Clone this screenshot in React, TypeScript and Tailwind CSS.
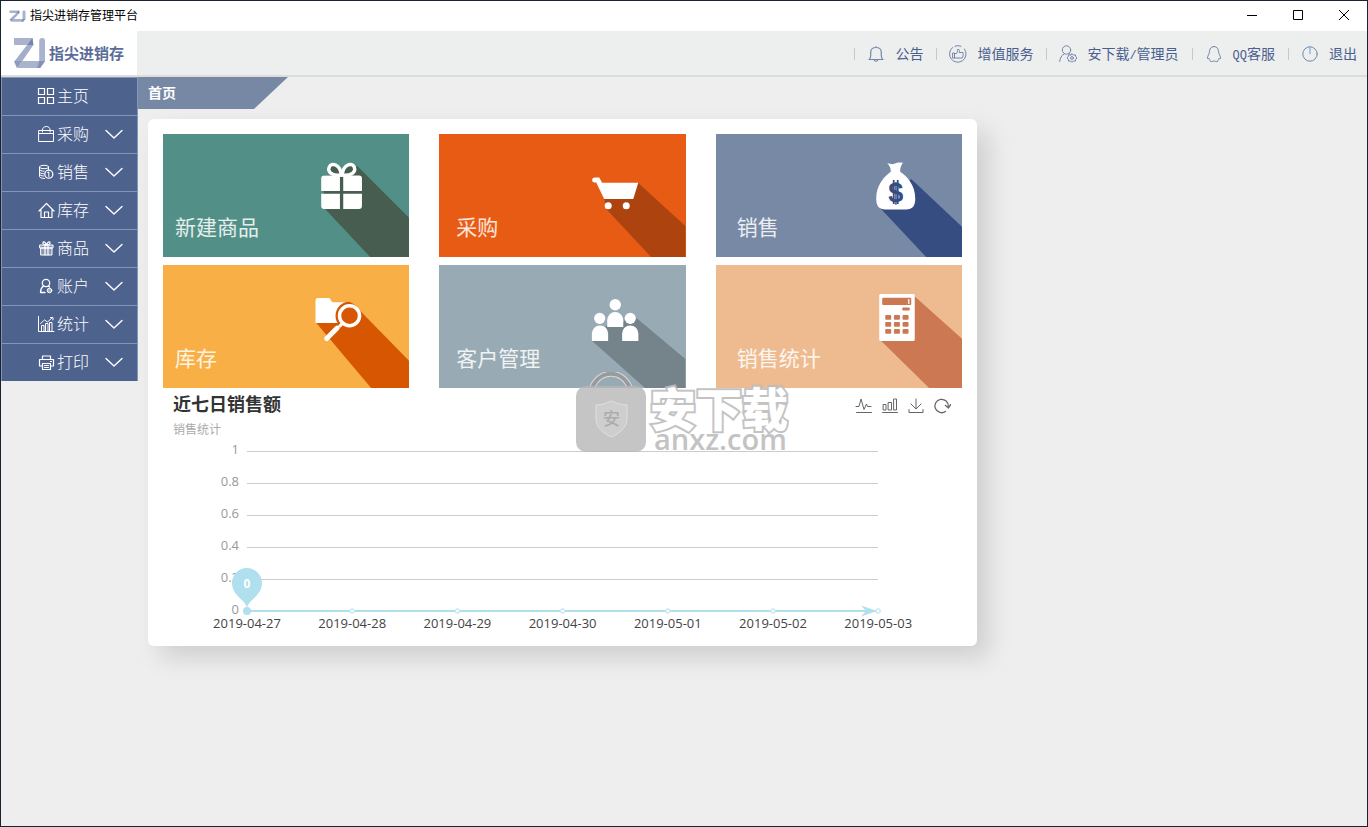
import React from "react";

type IconProps = { className?: string };

function Mark({ className }: IconProps) {
  return (
    <svg viewBox="0 0 34 32" preserveAspectRatio="none" className={className} aria-hidden="true">
      <path d="M1 1h19l-1 7H1z" fill="#a9b3cd" />
      <path d="M20 1l1 7L9 25H1z" fill="#a3aecb" />
      <path d="M20 1l1 7h-6z" fill="#7583aa" />
      <path d="M1 24l3 7 7-7z" fill="#8f9bbd" />
      <path d="M9 24h19l-3 7H4z" fill="#a9b3cd" />
      <path d="M27 4a3 3 0 0 1 6 0v20l-5 7h-4l3-7z" fill="#a9b3cd" />
      <path d="M27 24h6l-5 7h-3z" fill="#8491b5" />
    </svg>
  );
}

function StrokeIcon({ className, children }: IconProps & { children: React.ReactNode }) {
  return (
    <svg
      viewBox="0 0 18 18"
      className={className ?? "size-[18px] shrink-0"}
      fill="none"
      stroke="currentColor"
      strokeLinecap="round"
      strokeLinejoin="round"
      aria-hidden="true"
    >
      {children}
    </svg>
  );
}

const menu: { label: string; open: boolean; icon: React.ReactNode }[] = [
  {
    label: "主页",
    open: false,
    icon: (
      <StrokeIcon>
        <path strokeLinejoin="miter" strokeWidth="1.2" d="M1.5 1.5h6v6h-6zM10.5 1.5h6v6h-6zM1.5 10.5h6v6h-6zM10.5 10.5h6v6h-6z" />
      </StrokeIcon>
    ),
  },
  {
    label: "采购",
    open: true,
    icon: (
      <StrokeIcon>
        <path d="M2 5.500h14.500v11H2zM2 8.500h14.500M5.500 7V5c0-2 1.500-3.500 3.800-3.500s3.800 1.500 3.800 3.500v2" />
      </StrokeIcon>
    ),
  },
  {
    label: "销售",
    open: true,
    icon: (
      <StrokeIcon>
        <ellipse cx="7" cy="4" rx="4.500" ry="1.700" />
        <path d="M2.500 4v9.500c0 1 2 2 5 2M11.500 4v2.500M2.500 6.500c0 1 2 1.700 4.500 1.700M2.500 9c0 1 2 1.700 4 1.700M2.500 11.300c0 1 2 1.700 4 1.700" />
        <circle cx="11.800" cy="11.200" r="4" strokeWidth="1.300" />
        <path d="M11.800 9v4.500M10.700 9.500h1" />
      </StrokeIcon>
    ),
  },
  {
    label: "库存",
    open: true,
    icon: (
      <StrokeIcon>
        <path strokeWidth="1.200" d="M2 10L9.500 2.500 17 10M4 9v7.500h11V9M7.500 16v-5h4v5" />
      </StrokeIcon>
    ),
  },
  {
    label: "商品",
    open: true,
    icon: (
      <StrokeIcon>
        <path fill="currentColor" fillOpacity="0.350" d="M3 6h13v3H3zM4 9h11v7H4z" />
        <path strokeWidth="1.200" d="M8 6V16M11 6V16M9.500 6C7.500 6 5.500 5 6 3.500S8.500 3 9.500 6C10.500 3 12.500 2 13 3.500S11.500 6 9.500 6" />
      </StrokeIcon>
    ),
  },
  {
    label: "账户",
    open: true,
    icon: (
      <StrokeIcon>
        <circle cx="9" cy="6" r="3.700" strokeWidth="1.300" />
        <path strokeWidth="1.300" d="M6.500 9C4.500 10.500 3.500 12.500 3.500 15.500H8M11.500 9l1 1" />
        <circle cx="12.500" cy="13.500" r="2.300" fill="currentColor" fillOpacity="0.500" />
      </StrokeIcon>
    ),
  },
  {
    label: "统计",
    open: true,
    icon: (
      <StrokeIcon>
        <path d="M1.500 1.500v15h15.500M4.500 16V10.500h2.500V16M8.500 16V8.500H11V16M12.500 16V7.500H15V16M3.500 8.500l4-3.500 3 2 5-4.500M13.500 2.500h2.500v2.500" />
      </StrokeIcon>
    ),
  },
  {
    label: "打印",
    open: true,
    icon: (
      <StrokeIcon>
        <path strokeWidth="1.200" d="M5.500 6.500V3h8v3.500M5 13H2.500V6.500h14V13H14M5.500 10.500h8v6h-8zM7.500 12.500h4M7.500 14.500h4M13.500 8.500h1" />
      </StrokeIcon>
    ),
  },
];

const topLinks: { label: React.ReactNode; key: string; icon: React.ReactNode }[] = [
  {
    key: "notice",
    label: "公告",
    icon: (
      <StrokeIcon>
        <path strokeWidth="1.200" d="M2 14.500h14c-1.500-1-1.700-2.500-1.700-4V7.500c0-3-2.200-5-5.300-5S3.700 4.500 3.700 7.500v3c0 1.500-.2 3-1.700 4zM7.300 15c.3 1.500 3.100 1.500 3.400 0M9 2.500v-1" />
      </StrokeIcon>
    ),
  },
  {
    key: "service",
    label: "增值服务",
    icon: (
      <StrokeIcon>
        <path d="M3.500 2.500A8.300 8.300 0 1 0 15.500 4M6 1.200a8 8 0 0 1 6 0" />
        <path d="M4 8h1.500v5H4zM5.500 8.500H7.500C8.500 7.500 8.500 6 8.500 4.500h1.300c.7.700.7 1.700.4 3H14c.5 3 0 4.500-.8 5.500H5.500" />
      </StrokeIcon>
    ),
  },
  {
    key: "account",
    label: (
      <>
        安下载<span className="font-mono text-xs">/</span>管理员
      </>
    ),
    icon: (
      <StrokeIcon>
        <circle cx="7.500" cy="5" r="4.200" />
        <path d="M.7 16.500C1 13 2.500 10.500 5 9M10 8.500l1 .5" />
        <circle cx="13" cy="13" r="1.400" />
        <path d="M13 8.800l1.400 1.300 1.900-.3.500 1.900 1.200 1.300-1.200 1.300-.5 1.900-1.900-.3L13 17.300l-1.400-1.400-1.900.3-.5-1.900L8 13l1.200-1.300.5-1.900 1.900.3z" />
      </StrokeIcon>
    ),
  },
  {
    key: "qq",
    label: (
      <>
        <span className="font-mono text-xs">QQ</span>客服
      </>
    ),
    icon: (
      <StrokeIcon>
        <path d="M9 1.500c-3 0-4.500 2.200-4.500 5.200 0 2-2 4-2 6.300 0 1.200.8 1 1.500.3.200.9.600 1.500 1.200 2-1.200 1.500 2.300 1.700 3.800.5 1.500 1.200 5 1 3.800-.5.600-.5 1-1.100 1.200-2 .7.700 1.500.900 1.500-.3 0-2.300-2-4.300-2-6.300 0-3-1.500-5.200-4.500-5.200z" />
      </StrokeIcon>
    ),
  },
  {
    key: "exit",
    label: "退出",
    icon: (
      <StrokeIcon>
        <circle cx="9" cy="9" r="7.200" />
        <path d="M9 2.500v6" stroke="#7fb4e0" strokeWidth="1.300" />
      </StrokeIcon>
    ),
  },
];

const tiles: { label: string; bg: string; pad: string; art: React.ReactNode }[] = [
  {
    label: "新建商品",
    bg: "bg-[#529087]",
    pad: "pl-3",
    art: (
      <>
        <path d="M161 74L207 123H246V84L194 32 178 41H160z" fill="#465d4f" />
        <g fill="#465d4f" stroke="#fff" strokeWidth="3.400">
          <path d="M178 41C169 42 164 38 166 33s11-3 12 8z" />
          <path d="M179 41C188 42 193 38 191 33s-11-3-12 8z" />
        </g>
        <path fill="#fff" d="M161 41.500h15.700v15.500H158V44.500a3 3 0 0 1 3-3zM180 41.500h15.700a3 3 0 0 1 3 3V57H180zM158 59.700h18.700V75H161a3 3 0 0 1-3-3zM180 59.700h18.700V72a3 3 0 0 1-3 3H180z" />
      </>
    ),
  },
  {
    label: "采购",
    bg: "bg-[#e85b14]",
    pad: "pl-[17px]",
    art: (
      <>
        <path d="M165 64L167 75 212 123H246V92L199 49z" fill="#ad430f" />
        <path d="M155.500 43.500h4.500l3 5.200H199L194 65H165L157 48.500h-1.500a2.500 2.500 0 0 1 0-5z" fill="#fff" />
        <circle cx="169" cy="71.700" r="3.500" fill="#fff" />
        <circle cx="187" cy="71.700" r="3.500" fill="#fff" />
      </>
    ),
  },
  {
    label: "销售",
    bg: "bg-[#7789a5]",
    pad: "pl-[21px]",
    art: (
      <>
        <path d="M163 73L210 123H246V93L195 45z" fill="#364d82" />
        <path d="M171 29c3 1 5 1.500 7 .8 3-1.300 5.500-1.500 8.700-1-2 3-3.200 6-2.700 9 7 5 15 13 15 27 0 7-3 10.500-9 10.500h-21c-6 0-9-3.500-9-10.500 0-14 8-22 14.500-27C175 35 173.500 32 171 29z" fill="#fff" />
        <text x="179.500" y="67.500" textAnchor="middle" fontSize="27" fontWeight="700" fontFamily="Liberation Sans, sans-serif" fill="#364d82">$</text>
        <path d="M177.500 46v24M181.500 46v24" stroke="#364d82" strokeWidth="1.800" />
      </>
    ),
  },
  {
    label: "库存",
    bg: "bg-[#f8af46]",
    pad: "pl-3",
    art: (
      <>
        <path d="M152.300 57L208 123H246V96L197 46 180 37.300z" fill="#d65602" />
        <path d="M154.500 33h11c1 0 1.500.8 3.500 4.300H182V58H152.300V35.200a2.200 2.200 0 0 1 2.200-2.200z" fill="#fff" />
        <circle cx="186.300" cy="50.700" r="14" fill="#d65602" />
        <path d="M185 36h23v11l-8 2-8-9z" fill="#f8af46" />
        <path d="M196 40.500l14 16V40z" fill="#f8af46" />
        <circle cx="186.300" cy="50.700" r="10" fill="#d65602" stroke="#fff" strokeWidth="3.500" />
        <path d="M179 58.500l-3 3" stroke="#fff" strokeWidth="3" />
        <path d="M174 63L163.500 73.500" stroke="#fff" strokeWidth="5" strokeLinecap="round" />
      </>
    ),
  },
  {
    label: "客户管理",
    bg: "bg-[#98aab3]",
    pad: "pl-[17px]",
    art: (
      <>
        <path d="M153 76L206 123H246V94L196 52 168 60z" fill="#75848b" />
        <path d="M168 60h-8l8-12zM184 48l5 0-5 10z" fill="#98aab3" />
        <g fill="#fff">
          <circle cx="176" cy="39.700" r="5.700" />
          <path d="M168 62v-7a8 8 0 0 1 16 0v7z" />
          <circle cx="160.500" cy="53.300" r="5.600" />
          <path d="M152.700 76v-7.500a8.100 8.100 0 0 1 16.200 0V76z" />
          <circle cx="191" cy="53.300" r="5.600" />
          <path d="M182.900 76v-7.500a8.100 8.100 0 0 1 16.200 0V76z" />
        </g>
      </>
    ),
  },
  {
    label: "销售统计",
    bg: "bg-[#eebb90]",
    pad: "pl-[21px]",
    art: (
      <>
        <path d="M164 75L213 123H246V74L198 31z" fill="#cc7853" />
        <rect x="163" y="29" width="35.500" height="47" rx="1.500" fill="#fff" />
        <g fill="#cc7853">
          <rect x="166" y="32.700" width="29" height="7.300" rx="1" />
          <rect x="186" y="42.500" width="7.500" height="3" rx="1" />
          {[50, 57, 64].map((y) =>
            [169, 177.700, 186.300].map((x) => (
              <rect key={x + "-" + y} x={x} y={y} width="6" height="4.700" rx="1" />
            ))
          )}
        </g>
        <path d="M192.500 34v5" stroke="#fff" strokeWidth="1.200" />
      </>
    ),
  },
];

const tools: { label: string; icon: React.ReactNode }[] = [
  { label: "折线图", icon: <path d="M1 9.500h3L6 2l3 10.500L11.500 7l1 2.500H16M1.500 15.500h15" /> },
  { label: "柱状图", icon: <path strokeLinejoin="miter" d="M2.500 7.500h2.500v5.500h-2.500zM7.500 5.500h3V13h-3zM13 2h2.500v11h-2.500zM1.500 15.500h15" /> },
  { label: "下载", icon: <path d="M9 2v9.500M4 7l5 5 5-5M2 12.500v3h14v-3" /> },
  {
    label: "刷新",
    icon: (
      <>
        <path d="M12.500 14.500A6.700 6.700 0 1 1 15.300 9.500" strokeWidth="1.300" />
        <path d="M12.500 8.500l3 2.500 2-3.300" strokeWidth="1.300" />
      </>
    ),
  },
];

const dates = ["2019-04-27", "2019-04-28", "2019-04-29", "2019-04-30", "2019-05-01", "2019-05-02", "2019-05-03"];
const ticks = ["1", "0.8", "0.6", "0.4", "0.2", "0"];

function SalesChart() {
  return (
    <svg viewBox="0 0 799 191" className="block w-full font-['Open_Sans',sans-serif] text-[13px]" role="img" aria-label="近七日销售额">
      {ticks.map((t, i) => (
        <g key={t}>
          <path d={`M84 ${11.5 + i * 32}H715`} stroke="#ccc" />
          <text x="76" y={14 + i * 32} textAnchor="end" fill="#999">{t}</text>
        </g>
      ))}
      <path d="M84 171H704" stroke="#b0dfee" strokeWidth="2" />
      <path d="M714 171l-16-5.500 5 5.500-5 5.500z" fill="#b0dfee" />
      {dates.map((d, i) => (
        <g key={d}>
          <circle cx={84 + i * 105.200} cy="171" r="2" fill="#fff" stroke="#c9e9f3" strokeWidth="1.300" />
          <text x={84 + i * 105.200} y="188" textAnchor="middle" fill="#444">{d}</text>
        </g>
      ))}
      <path d="M84 168c-1-8-15-12-15-25a15 15 0 0 1 30 0c0 13-14 17-15 25z" fill="#b0dfee" />
      <circle cx="84" cy="171" r="4" fill="#b0dfee" />
      <text x="84" y="148" textAnchor="middle" fill="#fff" className="text-xs font-bold">0</text>
    </svg>
  );
}

function Watermark() {
  return (
    <div className="pointer-events-none absolute left-[428px] top-[253px] flex gap-1 opacity-90">
      <svg viewBox="0 0 70 80" className="h-20 w-[70px]" aria-hidden="true">
        <path d="M16 16C24-3 46-3 54 16" fill="none" stroke="#ddd" strokeWidth="6" />
        <path d="M16 16C24-3 46-3 54 16" fill="none" stroke="#999" strokeWidth="4" />
        <rect x="0" y="14" width="70" height="66" rx="10" fill="#b8b8b8" opacity="0.900" />
        <path d="M20 33c6 0 10-2 15.500-4C41 31 45 33 51 33v14c0 8-7 14-15.500 18C27 61 20 55 20 47z" fill="#c9c9c9" stroke="#ddd" />
        <text x="35.500" y="53" textAnchor="middle" fontSize="17" fontWeight="500" fill="#a4a4a4">安</text>
      </svg>
      <div className="flex flex-col pt-3 whitespace-nowrap">
        <span className="text-[46px] leading-[44px] font-black text-white [paint-order:stroke] [-webkit-text-stroke:4px_#bdbdbd]">安下载</span>
        <span className="pl-1 font-['Open_Sans',sans-serif] text-[29px] leading-[22px] font-semibold text-[#bdbdbd]">anxz.com</span>
      </div>
    </div>
  );
}

export default function App() {
  return (
    <div className="flex min-h-screen flex-col border border-[#1a2332] bg-[#eeeeee] font-['Noto_Sans_CJK_SC',sans-serif]">
      <div className="flex h-[30px] items-center bg-white pl-2">
        <Mark className="h-3 w-[17px]" />
        <span className="ml-1 pb-[2px] text-xs text-black">指尖进销存管理平台</span>
        <div className="ml-auto flex h-full pb-[2px] text-black">
          <button aria-label="最小化" className="flex w-[46px] items-center justify-center">
            <svg viewBox="0 0 10 10" className="size-[10px]"><path d="M0 5.500h10" stroke="currentColor" /></svg>
          </button>
          <button aria-label="最大化" className="flex w-[46px] items-center justify-center">
            <svg viewBox="0 0 10 10" className="size-[10px]"><path d="M.5.5h9v9h-9z" fill="none" stroke="currentColor" /></svg>
          </button>
          <button aria-label="关闭" className="flex w-[46px] items-center justify-center">
            <svg viewBox="0 0 10 10" className="size-[10px]"><path d="M0 0l10 10M10 0L0 10" stroke="currentColor" /></svg>
          </button>
        </div>
      </div>

      <header className="flex h-[46px] border-b-2 border-[#dcdcdc] bg-[#edeeee]">
        <div className="flex w-[136px] shrink-0 items-center gap-[3px] bg-white pl-3">
          <Mark className="h-8 w-[33px]" />
          <span className="text-[15px] font-bold whitespace-nowrap text-[#5c6c98]">指尖进销存</span>
        </div>
        <nav className="ml-auto flex items-center pt-[2px] text-sm text-[#4a5f8f]">
          {topLinks.map((l) => (
            <a key={l.key} href="#" className="flex items-center pr-[13px] whitespace-nowrap last:pr-[10px]">
              <span className="mr-3 h-3 w-px bg-[#c8c8c8]" />
              <span className="mr-[10px] text-[#7587a8]">{l.icon}</span>
              <span className="pb-[2px]">{l.label}</span>
            </a>
          ))}
        </nav>
      </header>

      <div className="flex flex-1 items-start">
        <nav className="w-[137px] shrink-0 border-x border-[#8496b8] bg-[#4e628e] text-white">
          {menu.map((m) => (
            <button key={m.label} className="flex h-[38px] w-full items-center border-t border-[#8496b8] pb-[2px] pl-[35px]">
              {m.icon}
              <span className="ml-[2px] pb-px text-base font-light">{m.label}</span>
              {m.open && (
                <StrokeIcon className="mr-[14px] ml-auto size-[18px]">
                  <path strokeWidth="1.400" d="M1 5.500l8 7.500 8-7.500" />
                </StrokeIcon>
              )}
            </button>
          ))}
        </nav>

        <div className="min-w-0 flex-1">
          <div className="flex h-8 w-[150px] items-center bg-[#7788a5] pb-[2px] pl-[10px] text-sm font-bold text-white [clip-path:polygon(0_0,100%_0,116px_100%,0_100%)]">
            首页
          </div>
          <main className="p-[10px]">
            <section className="relative max-w-[829px] rounded-md bg-white p-[15px] shadow-[12px_12px_24px_rgba(0,0,0,0.13)]">
              <div className="grid grid-cols-3 gap-x-[30px] gap-y-2">
                {tiles.map((t) => (
                  <a key={t.label} href="#" className={`relative flex aspect-[2/1] items-end overflow-hidden pb-[17px] ${t.bg} ${t.pad}`}>
                    <svg viewBox="0 0 246 123" className="absolute inset-0 size-full" aria-hidden="true">{t.art}</svg>
                    <span className="relative text-[21px] leading-7 text-white/85">{t.label}</span>
                  </a>
                ))}
              </div>
              <div className="flex justify-between pr-[11px] pl-[10px]">
                <div>
                  <h2 className="pt-[3px] text-lg leading-6 font-bold text-[#333]">近七日销售额</h2>
                  <p className="pt-[3px] text-xs leading-[22px] text-[#aaa]">销售统计</p>
                </div>
                <div className="flex items-start gap-2 pt-[9px] text-[#666]">
                  {tools.map((t) => (
                    <button key={t.label} aria-label={t.label}>
                      <StrokeIcon>{t.icon}</StrokeIcon>
                    </button>
                  ))}
                </div>
              </div>
              <SalesChart />
              <Watermark />
            </section>
          </main>
        </div>
      </div>
    </div>
  );
}
